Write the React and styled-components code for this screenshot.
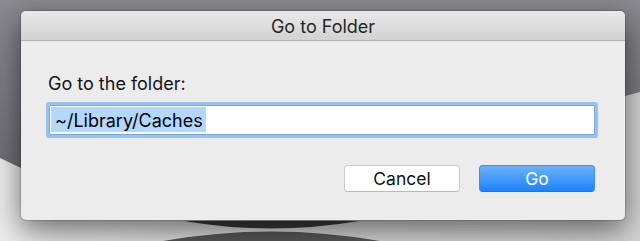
import React from 'react';
import styled, { createGlobalStyle } from 'styled-components';

const GlobalStyle = createGlobalStyle`
  html, body {
    margin: 0;
    padding: 0;
  }
  body {
    background: #e6e6e6;
    font-family: Inter, "Liberation Sans", Arial, sans-serif;
  }
`;

const Screen = styled.div`
  position: relative;
  width: 640px;
  height: 241px;
  overflow: hidden;
  box-sizing: border-box;
  padding: 11px 0 0 21px;
`;

// wallpaper shapes behind the sheet
const Backdrop = styled.svg`
  position: absolute;
  inset: 0;
  z-index: 0;
`;

const Dialog = styled.div`
  position: relative;
  z-index: 1;
  width: 604px;
  background: #ececec;
  border-radius: 5px;
  overflow: hidden;
  box-shadow: 0 0 0 1px rgba(0, 0, 0, 0.14), 0 10px 30px rgba(0, 0, 0, 0.55);
`;

const TitleBar = styled.div`
  height: 27px;
  padding-top: 2px;
  border-bottom: 1px solid #b3b3b3;
  background: linear-gradient(#e9e9e9, #d2d2d2);
  display: flex;
  align-items: center;
  justify-content: center;
  font-size: 18px;
  color: #262626;
`;

const Body = styled.div`
  display: flex;
  flex-direction: column;
  padding: 32px 30px 28px 28px;
`;

const Label = styled.div`
  font-size: 18px;
  line-height: 22px;
  color: #141414;
  margin: 0 0 10px -1px;
`;

const Field = styled.div`
  height: 30px;
  box-sizing: border-box;
  background: #fff;
  border: 1px solid #74a9e6;
  border-radius: 1px;
  box-shadow: 0 0 0 3px #98c3f1;
  display: flex;
  align-items: flex-start;
  padding-left: 1px;
`;

const Selection = styled.span`
  display: inline-block;
  margin-top: 1px;
  height: 25px;
  line-height: 25px;
  padding: 1px 3px 0 4px;
  box-sizing: border-box;
  background: #b3d7ff;
  font-size: 18px;
  color: #000;
`;

const Actions = styled.div`
  display: flex;
  justify-content: flex-end;
  gap: 19px;
  margin-top: 30px;
`;

const Button = styled.button`
  width: 116px;
  height: 27px;
  box-sizing: border-box;
  border-radius: 4px;
  font-family: inherit;
  font-size: 17.5px;
  padding: 0;
  cursor: pointer;
  border: 1px solid ${p => (p.$primary ? '#3d8ef0' : '#cbcbcb')};
  border-bottom-color: ${p => (p.$primary ? '#1f74e4' : '#b9b9b9')};
  color: ${p => (p.$primary ? '#fff' : '#111')};
  background: ${p => (p.$primary ? 'linear-gradient(#6cb2f9, #1a83fb)' : '#fff')};
`;

export default function App() {
  return (
    <Screen>
      <GlobalStyle />
      <Backdrop width="640" height="241" viewBox="0 0 640 241">
        <defs>
          <linearGradient id="dark" x1="0" y1="0" x2="0" y2="1">
            <stop offset="0" stopColor="#8b8a8f" />
            <stop offset="1" stopColor="#68676c" />
          </linearGradient>
          <linearGradient id="light" x1="0" y1="0" x2="1" y2="0">
            <stop offset="0" stopColor="#ececec" />
            <stop offset="0.5" stopColor="#d8d8d8" />
            <stop offset="1" stopColor="#d4d4d4" />
          </linearGradient>
        </defs>
        <rect width="640" height="241" fill="url(#light)" />
        <polygon points="0,0 640,0 640,92 625,96 300,200 21,168 0,158" fill="url(#dark)" />
        <path d="M184,221 Q271,236 359,221 Z" fill="#3a3a3a" />
        <path d="M163,241 Q271,222 380,241 Z" fill="#585858" />
      </Backdrop>
      <Dialog>
        <TitleBar>Go to Folder</TitleBar>
        <Body>
          <Label>Go to the folder:</Label>
          <Field>
            <Selection>~/Library/Caches</Selection>
          </Field>
          <Actions>
            <Button>Cancel</Button>
            <Button $primary>Go</Button>
          </Actions>
        </Body>
      </Dialog>
    </Screen>
  );
}
